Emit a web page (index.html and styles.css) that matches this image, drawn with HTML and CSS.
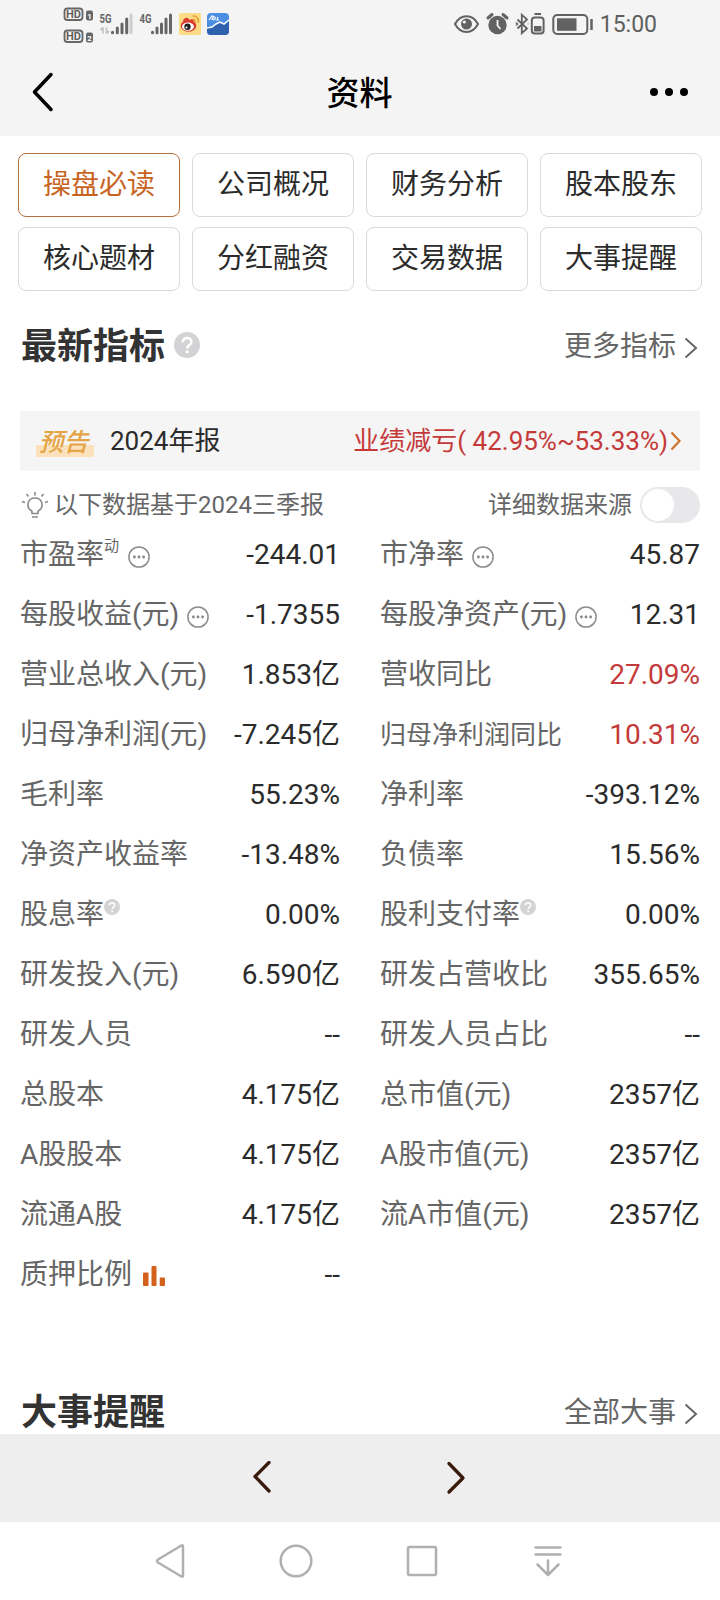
FILE: index.html
```html
<!DOCTYPE html>
<html lang="zh-CN">
<head>
<meta charset="utf-8">
<title>资料</title>
<link rel="stylesheet" href="styles.css">
</head>
<body>
<svg class="defs" width="0" height="0">
  <symbol id="dots" viewBox="0 0 22 22"><circle cx="11" cy="11" r="10.1" fill="none" stroke="#8c8c8c" stroke-width="1.5"/><g fill="#858585"><circle cx="6.4" cy="11" r="1.4"/><circle cx="11" cy="11" r="1.4"/><circle cx="15.6" cy="11" r="1.4"/></g></symbol>
  <symbol id="help" viewBox="0 0 26 26"><circle cx="13" cy="13" r="13" fill="#d3d3d5"/><path d="M8.8 10.2c0-5.8 8.6-5.4 8.6-.3 0 3-4.3 3.4-4.3 6.8" fill="none" stroke="#fff" stroke-width="2.5"/><circle cx="13.1" cy="19.8" r="1.6" fill="#fff"/></symbol>
  <symbol id="more" viewBox="0 0 14 22"><path d="M1.5 1.5 L12 11 L1.5 20.5" fill="none" stroke="#666" stroke-width="2"/></symbol>
</svg>
<header class="top">
  <div class="status">
    <svg class="status-left" width="170" height="48" viewBox="60 0 170 48">
      <g fill="none" stroke="#666" stroke-width="1.8"><rect x="64.500" y="8.500" width="18" height="11.500" rx="3"/><rect x="64.500" y="30.500" width="18" height="11.500" rx="3"/></g>
      <g class="st-hd"><text x="66" y="18.300" textLength="15" lengthAdjust="spacingAndGlyphs">HD</text><text x="66" y="40.300" textLength="15" lengthAdjust="spacingAndGlyphs">HD</text></g>
      <rect x="86" y="10.500" width="7" height="10" rx="2" fill="#666"/><rect x="86" y="32.500" width="7" height="10" rx="2" fill="#666"/>
      <g class="st-sim"><text x="87.300" y="18.800">1</text><text x="87.300" y="40.800">2</text></g>
      <g class="st-net"><text x="99.500" y="23" textLength="12" lengthAdjust="spacingAndGlyphs">5G</text><text x="139.500" y="23" textLength="12" lengthAdjust="spacingAndGlyphs">4G</text></g>
      <path d="M103 27.500v6M100.500 30l2.500-2.500M106.500 27.500v6M109 31l-2.500 2.500" stroke="#c4c4c4" stroke-width="1.800" fill="none"/>
      <g stroke="#666" stroke-width="3" stroke-linecap="round"><path d="M112.500 32.200v.5M117.300 28v4.700M122 24v8.700M126.700 19v13.700M152.500 32.200v.5M157 28v4.700M161.500 24v8.700M166 19v13.700M170.500 15v17.700"/><path d="M131 15v17.700" stroke="#cecece"/></g>
      <rect x="179" y="13" width="22" height="22" rx="1.500" fill="#fcdc86"/>
      <ellipse cx="188.500" cy="25.800" rx="7.800" ry="6" fill="#d93a2d"/><path d="M183 21c1-4 6-4 6-1 4-2 6 0 4 3z" fill="#d93a2d"/>
      <ellipse cx="188" cy="26.700" rx="5.900" ry="4.100" fill="#fff"/><circle cx="187.500" cy="26.800" r="3.200" fill="#222"/><circle cx="186.500" cy="27.500" r="1" fill="#fff"/>
      <path d="M192.500 16.300c4-1 7 2.500 5.500 6.500M192.500 19.500c2-.4 3.300 1 2.600 3" fill="none" stroke="#e3a02e" stroke-width="1.500"/>
      <rect x="207" y="13" width="22" height="22" rx="4" fill="#4b8de2"/><path d="M207 28l5-1 4-3 4-2 4 2 5-4v11a4 4 0 0 1-4 4h-14a4 4 0 0 1-4-4z" fill="#2f62ae"/>
      <path d="M207 28l5-1 4-3 4-2 4 2 5-4" fill="none" stroke="#fff" stroke-width="1.500"/><path d="M209 20l3-4 2 .5-2 2.500 2 1M215.500 17l-1 3M218 17l-1 3 2 0" stroke="#fff" stroke-width="1.200" fill="none"/>
    </svg>
    <div class="status-right">
      <svg width="142" height="48" viewBox="452 0 142 48">
        <g fill="none" stroke="#626262" stroke-width="2"><path d="M455 24c5.500-10.500 17.500-10.500 23 0-5.500 10.500-17.500 10.500-23 0z"/><path d="M517.500 19.500l9.500 9-5.200 4.700V14.700l5.200 4.800-9.500 9" stroke-width="1.800"/><rect x="531.800" y="17.500" width="11.800" height="16" rx="3"/><rect x="553.300" y="15" width="34" height="19" rx="4"/></g>
        <circle cx="466.500" cy="24" r="5.500" fill="#626262"/><circle cx="464.300" cy="22" r="1.600" fill="#f4f4f4"/>
        <circle cx="497.500" cy="25" r="9.200" fill="#626262"/><path d="M488 18l4-3.500M507 18l-4-3.500" stroke="#626262" stroke-width="3" stroke-linecap="round"/><path d="M497.500 20v5.500l3 3.500" fill="none" stroke="#f4f4f4" stroke-width="1.800"/>
        <path d="M516 22.500l1.500 1.500-1.500 1.500M527.800 24h.5" stroke="#626262" stroke-width="1.600" fill="none"/>
        <path d="M534.500 14h6.500" stroke="#626262" stroke-width="2"/><rect x="534" y="26" width="7.500" height="5.500" fill="#626262"/>
        <rect x="557" y="18.300" width="19.500" height="12.500" fill="#626262"/><path d="M591.500 19v11" stroke="#626262" stroke-width="2.500"/>
      </svg>
      <span class="clock">15:00</span>
    </div>
  </div>
  <div class="titlebar">
    <svg width="24" height="42" viewBox="0 0 24 42"><path d="M21 3.500L4.500 21 21 38.500" fill="none" stroke="#000" stroke-width="3.500" stroke-linecap="round" stroke-linejoin="round"/></svg>
    <h1>资料</h1>
    <svg width="40" height="12" viewBox="0 0 40 12"><circle cx="5" cy="6" r="4"/><circle cx="20" cy="6" r="4"/><circle cx="35" cy="6" r="4"/></svg>
  </div>
</header>
<nav class="tabs">
  <a class="tab active">操盘必读</a><a class="tab">公司概况</a><a class="tab">财务分析</a><a class="tab">股本股东</a>
  <a class="tab">核心题材</a><a class="tab">分红融资</a><a class="tab">交易数据</a><a class="tab">大事提醒</a>
</nav>
<main class="content">
  <section class="head">
    <h2>最新指标</h2><svg class="help" width="26" height="26"><use href="#help"/></svg>
    <a class="all">更多指标<svg width="14" height="22"><use href="#more"/></svg></a>
  </section>
  <section class="notice">
    <span class="badge">预告</span><span class="period">2024年报</span>
    <span class="forecast">业绩减亏( 42.95%~53.33%)</span>
    <svg width="12" height="20" viewBox="0 0 12 20"><path d="M1.500 1.500l8 8.500-8 8.500" fill="none" stroke="#cf722b" stroke-width="2.200"/></svg>
  </section>
  <section class="basis">
    <svg width="28" height="28" viewBox="0 0 28 28"><g fill="none" stroke="#8a8a8a" stroke-width="1.600"><path d="M12 22.500v-2.300c-6.800-4-4.500-13.200 3-13.200s9.800 9.200 3 13.200v2.300zM12 26h6M15 4.500V1M8.500 5.500l-2-2.500M21.500 5.500l2-2.500M5 11.500l-3-1M25 11.500l3-1"/></g></svg>
    <span>以下数据基于2024三季报</span>
    <span class="source">详细数据来源</span><i class="toggle"></i>
  </section>
  <section class="grid">
    <div class="row"><span class="label">市盈率<sup>动</sup><svg class="dots"><use href="#dots"/></svg></span><b>-244.01</b></div>
    <div class="row"><span class="label">市净率<svg class="dots"><use href="#dots"/></svg></span><b>45.87</b></div>
    <div class="row"><span class="label">每股收益(元)<svg class="dots"><use href="#dots"/></svg></span><b>-1.7355</b></div>
    <div class="row"><span class="label">每股净资产(元)<svg class="dots"><use href="#dots"/></svg></span><b>12.31</b></div>
    <div class="row"><span class="label">营业总收入(元)</span><b>1.853亿</b></div>
    <div class="row"><span class="label">营收同比</span><b class="up">27.09%</b></div>
    <div class="row"><span class="label">归母净利润(元)</span><b>-7.245亿</b></div>
    <div class="row"><span class="label tight">归母净利润同比</span><b class="up">10.31%</b></div>
    <div class="row"><span class="label">毛利率</span><b>55.23%</b></div>
    <div class="row"><span class="label">净利率</span><b>-393.12%</b></div>
    <div class="row"><span class="label">净资产收益率</span><b>-13.48%</b></div>
    <div class="row"><span class="label">负债率</span><b>15.56%</b></div>
    <div class="row"><span class="label">股息率<svg class="mini"><use href="#help"/></svg></span><b>0.00%</b></div>
    <div class="row"><span class="label">股利支付率<svg class="mini"><use href="#help"/></svg></span><b>0.00%</b></div>
    <div class="row"><span class="label">研发投入(元)</span><b>6.590亿</b></div>
    <div class="row"><span class="label">研发占营收比</span><b>355.65%</b></div>
    <div class="row"><span class="label">研发人员</span><b>--</b></div>
    <div class="row"><span class="label">研发人员占比</span><b>--</b></div>
    <div class="row"><span class="label">总股本</span><b>4.175亿</b></div>
    <div class="row"><span class="label">总市值(元)</span><b>2357亿</b></div>
    <div class="row"><span class="label">A股股本</span><b>4.175亿</b></div>
    <div class="row"><span class="label">A股市值(元)</span><b>2357亿</b></div>
    <div class="row"><span class="label">流通A股</span><b>4.175亿</b></div>
    <div class="row"><span class="label">流A市值(元)</span><b>2357亿</b></div>
    <div class="row"><span class="label">质押比例<svg class="bars" viewBox="0 0 22 20"><g fill="#d3601c"><rect y="6.500" width="5.500" height="13.500" rx="1"/><rect x="8.500" width="5" height="20" rx="1"/><rect x="16.700" y="11.500" width="5.300" height="8.500" rx="1"/></g></svg></span><b>--</b></div>
  </section>
  <section class="head events">
    <h2>大事提醒</h2>
    <a class="all">全部大事<svg width="14" height="22"><use href="#more"/></svg></a>
  </section>
</main>
<footer>
  <div class="pager">
    <svg width="20" height="34" viewBox="0 0 20 34"><path d="M17 1.500L3 15.500l14 14.500" fill="none" stroke="#3a1a0c" stroke-width="3.300" stroke-linecap="round" stroke-linejoin="round"/></svg>
    <svg width="20" height="34" viewBox="0 0 20 34"><path d="M3 2.500l14 14.500L3 31" fill="none" stroke="#3a1a0c" stroke-width="3.300" stroke-linecap="round" stroke-linejoin="round"/></svg>
  </div>
  <div class="sysnav">
    <svg width="34" height="36" viewBox="0 0 34 36"><path d="M30 3.500v29q0 2-2 .8L5 19.500q-2-1.500 0-3L28 2.700q2-1.200 2 .8z"/></svg>
    <svg width="34" height="36" viewBox="0 0 34 36"><circle cx="17" cy="18" r="15.300"/></svg>
    <svg width="34" height="36" viewBox="0 0 34 36"><rect x="3" y="4" width="28" height="28" rx="1.500"/></svg>
    <svg width="34" height="36" viewBox="0 0 34 36"><path d="M4.500 4.500h25M4.500 11.500h25M17 17.500v14M6.500 21.500L17 32l10.500-10.500"/></svg>
  </div>
</footer>
</body>
</html>
```
FILE: styles.css
```css
* { box-sizing: border-box; margin: 0; padding: 0; }
body {
  width: 720px; height: 1600px; overflow: hidden;
  display: flex; flex-direction: column;
  background: #fff; color: #2b2b2b;
  font: 400 28px/40px Roboto, "Noto Sans CJK SC", sans-serif;
}
svg { display: block; flex: none; }
.defs { position: absolute; }
h1, h2 { line-height: 1; }

.top { height: 136px; background: #f4f4f4; }
.status { display: flex; justify-content: space-between; height: 48px; padding: 0 63px 0 60px; }
.status-right { display: flex; align-items: center; gap: 6px; }
.clock { font-size: 23px; color: #5e5e5e; line-height: 48px; padding-top: 2px; }
.st-hd { font: 700 11px Roboto, sans-serif; fill: #606060; }
.st-sim { font: 700 8px Roboto, sans-serif; fill: #fff; }
.st-net { font: 700 13px Roboto, sans-serif; fill: #666; }
.titlebar { display: flex; align-items: center; justify-content: space-between; height: 88px; padding: 0 31px 0 30px; }
.titlebar h1 { font-size: 33px; font-weight: 500; color: #000; padding: 2px 0 0 16px; }

.tabs { display: grid; grid-template-columns: repeat(4, 162px); gap: 10px 12px; padding: 17px 18px 0; }
.tab { height: 64px; border: 1px solid #d8dadb; border-radius: 8px; text-align: center; line-height: 62px; }
.tab.active { border-color: #b5703f; color: #c8641f; }

.content { flex: 1; min-height: 0; overflow: hidden; padding: 0 20px; }
.head { display: flex; align-items: center; height: 40px; margin-top: 34px; }
.head h2 { font-size: 36px; font-weight: 700; color: #333; padding: 3px 0 0 1px; }
.help { margin-left: 9px; }
.all { display: flex; align-items: center; gap: 8px; margin: 4px 2px 0 auto; color: #666; }
.all svg { margin-top: 1px; }

.notice { display: flex; align-items: center; height: 60px; margin-top: 46px; padding: 0 18px 0 16px; background: #f5f5f5; font-size: 26px; }
.badge {
  width: 58px; height: 32px; line-height: 33px; text-align: center; padding-right: 3px;
  font-size: 25px; font-weight: 500; font-style: italic; color: #e5a545;
  margin-top: 1px;
  background: linear-gradient(transparent 19px, #fbe2bd 19px 31px, transparent 31px);
}
.period { margin-left: 16px; }
.forecast { margin-left: auto; margin-right: 2px; color: #c43a3a; white-space: pre; }

.basis { display: flex; align-items: center; height: 54px; padding-top: 14px; font-size: 24px; color: #666; }
.basis svg { margin-right: 6px; }
.source { margin-left: auto; }
.toggle { display: block; width: 60px; height: 36px; margin-left: 8px; border-radius: 18px; background: #e8e8eb; padding: 2px; }
.toggle::before { content: ""; display: block; width: 32px; height: 32px; border-radius: 50%; background: #fff; }

.grid { display: grid; grid-template-columns: 320px 320px; column-gap: 40px; grid-auto-rows: 60px; }
.row { display: flex; align-items: center; justify-content: space-between; white-space: nowrap; }
.row b { font-weight: 400; }
.row .up { color: #c43a3a; }
.label { display: flex; align-items: center; color: #666; }
.tight { font-size: 26px; }
.label sup { font-size: 15px; line-height: 18px; align-self: flex-start; margin-top: 2px; }
.dots { width: 22px; height: 22px; margin: 3px 0 0 8px; }
sup + .dots { margin-left: 9px; }
.mini { width: 16px; height: 16px; margin-bottom: 16px; }
.bars { width: 22px; height: 20px; margin: 1px 0 0 11px; }
.events { margin-top: 86px; }

.pager { display: flex; align-items: center; gap: 174px; height: 88px; padding-left: 252px; background: #eee; }
.sysnav { display: flex; align-items: center; justify-content: space-between; height: 78px; padding: 0 155px 0 153px; }
.sysnav svg { fill: none; stroke: #b0b0b0; stroke-width: 2.500px; stroke-linecap: round; stroke-linejoin: round; }
```
